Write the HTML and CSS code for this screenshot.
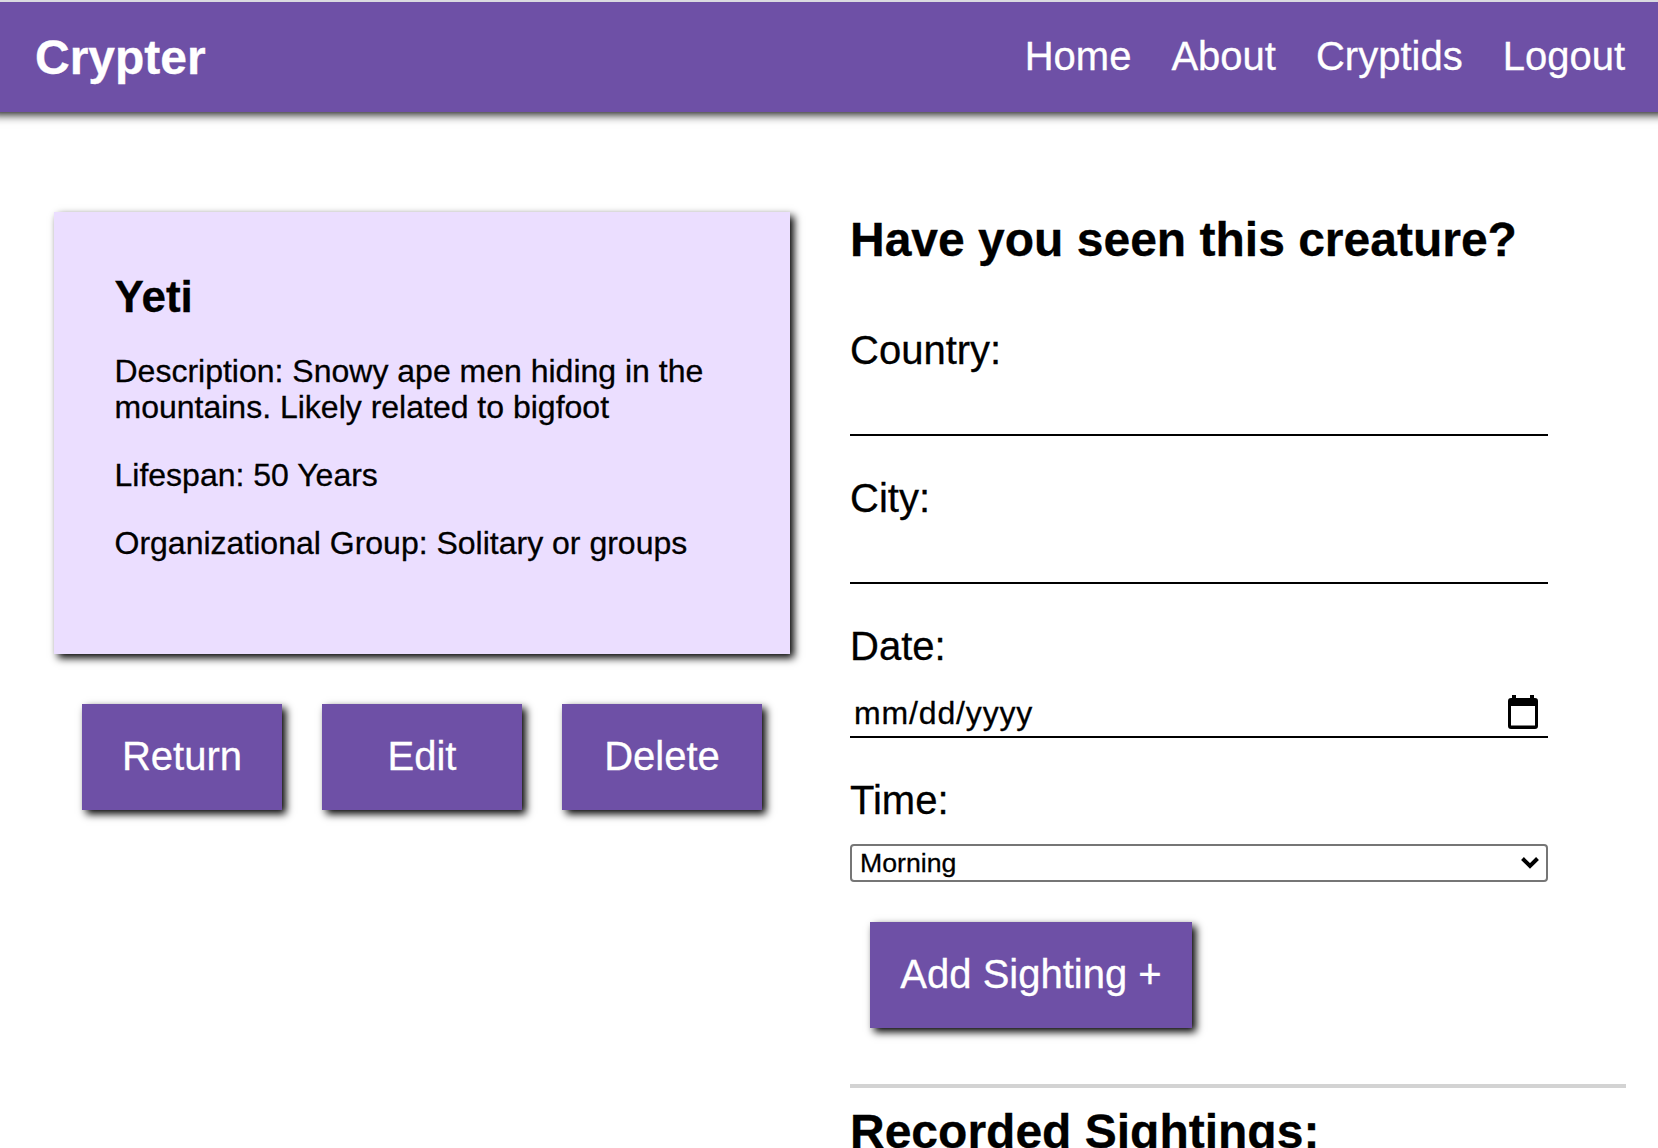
FILE: index.html
```html
<!DOCTYPE html>
<html lang="en">
<head>
<meta charset="utf-8">
<title>Crypter</title>
<link rel="stylesheet" href="styles.css">
</head>
<body>
<header class="site-header">
  <h1 class="brand">Crypter</h1>
  <nav class="site-nav">
    <a>Home</a>
    <a>About</a>
    <a>Cryptids</a>
    <a>Logout</a>
  </nav>
</header>
<main class="page">
  <section class="creature">
    <article class="card">
      <h2 class="card-title">Yeti</h2>
      <p>Description: Snowy ape men hiding in the mountains. Likely related to bigfoot</p>
      <p>Lifespan: 50 Years</p>
      <p>Organizational Group: Solitary or groups</p>
    </article>
    <div class="actions">
      <button class="button">Return</button>
      <button class="button">Edit</button>
      <button class="button">Delete</button>
    </div>
  </section>
  <section class="sightings">
    <h2 class="heading">Have you seen this creature?</h2>
    <form class="form">
      <label class="field">Country:<input class="line-input" type="text"></label>
      <label class="field">City:<input class="line-input" type="text"></label>
      <div class="field">Date:
        <div class="line-input date-input">
          <span>mm/dd/yyyy</span>
          <svg class="calendar" viewBox="0 0 30 34" width="30" height="34">
            <path fill-rule="evenodd" d="M4 0h4v3h14V0h4v3h1q3 0 3 3v25q0 3-3 3H3q-3 0-3-3V6q0-3 3-3h1zM3 11v19.500h24V11z"/>
          </svg>
        </div>
      </div>
      <div class="field">Time:
        <div class="select">
          <span>Morning</span>
          <svg viewBox="0 0 18 12" width="18" height="12"><path d="M1.500 1.500L9 9l7.500-7.500" fill="none" stroke="#000" stroke-width="4"/></svg>
        </div>
      </div>
      <button class="button add-button" type="button">Add Sighting +</button>
    </form>
    <hr class="divider">
    <h2 class="heading">Recorded Sightings:</h2>
  </section>
</main>
</body>
</html>
```
FILE: styles.css
```css
* { box-sizing: border-box; }

html { height: 100%; overflow: hidden; }

body {
  margin: 0;
  height: 100%;
  overflow: hidden;
  background: #fff;
  color: #000;
  font-family: "Liberation Sans", Arial, Helvetica, sans-serif;
  -webkit-text-stroke: 0.3px currentColor;
}

h1, h2, p { margin: 0; }

.site-header {
  display: flex;
  justify-content: space-between;
  height: 112px;
  padding: 28px 33px 0 35px;
  border-top: 2px solid #dadae0;
  background: #6e50a6;
  color: #fff;
  box-shadow: 0 -8px 10px 10px #000;
}

.brand { font-size: 48px; line-height: 56px; }

.site-nav {
  display: flex;
  gap: 40px;
  padding-top: 3px;
  font-size: 40px;
  line-height: 46px;
}

.page {
  display: flex;
  gap: 60px;
  padding: 100px 32px 0 54px;
}

.creature { width: 736px; }

.card {
  height: 442px;
  padding: 60px 60px 60px 60.5px;
  background: #ebdeff;
  box-shadow: 4px 4px 8px #000;
  font-size: 32px;
  line-height: 36px;
}

.card-title { margin-bottom: 31px; font-size: 44px; line-height: 50px; }

.card p + p { margin-top: 32px; }

.actions {
  display: flex;
  justify-content: center;
  gap: 40px;
  margin-top: 50px;
}

.button {
  width: 200px;
  height: 106px;
  padding: 0 0 2px;
  border: 0;
  background: #6e50a6;
  color: #fff;
  font: 40px/46px "Liberation Sans", Arial, sans-serif;
  box-shadow: 4px 4px 8px #000;
}

.sightings { width: 776px; }

.heading { font-size: 48px; line-height: 56px; white-space: nowrap; }

.form {
  width: 698px;
  margin-top: 59px;
}

.field {
  display: block;
  margin-bottom: 39px;
  font-size: 40px;
  line-height: 46px;
}

.line-input {
  display: block;
  width: 100%;
  height: 63px;
  padding: 0;
  border: 0;
  border-bottom: 2px solid #000;
  background: none;
}

.date-input {
  display: flex;
  align-items: flex-end;
  justify-content: space-between;
  height: 69px;
  padding: 0 10px 5px 4px;
  font-size: 32px;
  line-height: 36px;
}

.date-input span { letter-spacing: 0.85px; }

.calendar { margin-bottom: 2px; }

.select {
  display: flex;
  align-items: center;
  justify-content: space-between;
  height: 38px;
  margin-top: 21px;
  padding: 0 7px 0 8px;
  border: 2px solid #767676;
  border-radius: 4px;
  font-size: 26.67px;
  line-height: 34px;
}

.add-button { display: block; width: 322px; margin-left: 20px; margin-top: 40px; }

.divider {
  height: 4px;
  margin: 56px 0 16px;
  border: 0;
  background: #d3d3d3;
}
```
